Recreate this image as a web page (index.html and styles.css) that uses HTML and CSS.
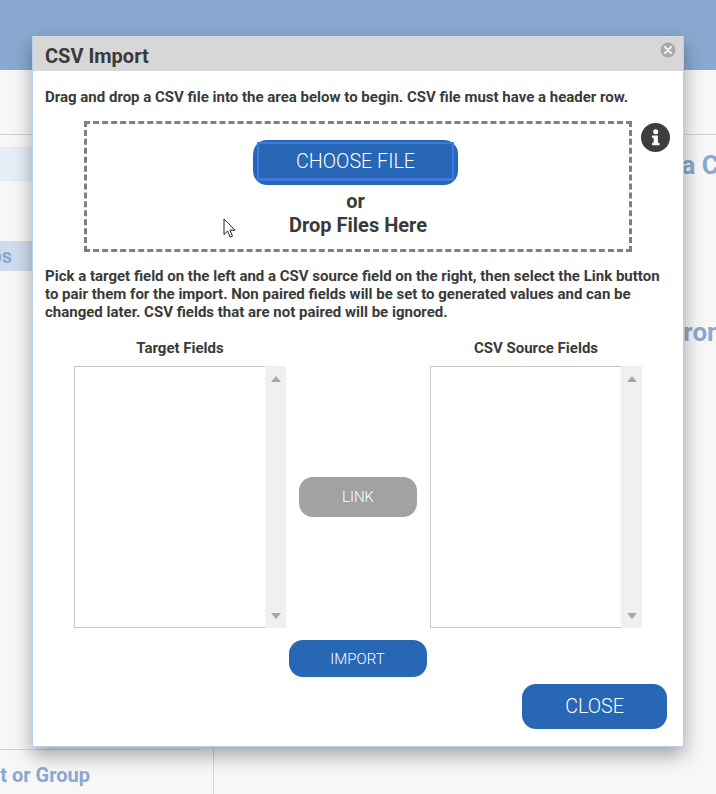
FILE: index.html

```html
<!DOCTYPE html>
<html lang="en">
<head>
<meta charset="utf-8"/>
<title>CSV Import</title>
<link rel="stylesheet" href="styles.css">
</head>
<body>
<div class="top-band"></div>
<div class="page">
  <div class="sidebar">
    <div class="side-head"></div>
    <div class="side-item light"></div>
    <div class="side-item active">Contacts and Groups</div>
    <div class="side-foot">Add Contact or Group</div>
  </div>
  <div class="main">
    <div class="main-head"></div>
    <div class="main-title first">Import Data Collection</div>
    <div class="main-title second">from File</div>
  </div>
</div>

<div class="modal">
  <div class="modal-header">
    <span class="modal-title">CSV Import</span>
    <span class="modal-x">
      <svg width="16" height="16" viewBox="0 0 16 16"><circle cx="8" cy="8" r="7.5" fill="#aaa"/><path d="M5 5l6 6M11 5l-6 6" stroke="#eee" stroke-width="2.2" stroke-linecap="round"/></svg>
    </span>
  </div>
  <div class="modal-body">
    <p class="note">Drag and drop a CSV file into the area below to begin. CSV file must have a header row.</p>
    <div class="drop-row">
      <div class="drop-zone">
        <button class="btn choose-btn"><span class="choose-inner">CHOOSE FILE</span></button>
        <div class="drop-or">or</div>
        <div class="drop-text">Drop Files Here</div>
      </div>
      <span class="info-icon">
        <svg width="29" height="29" viewBox="0 0 30 30"><circle cx="15" cy="15" r="15" fill="#3d3d3d"/><circle cx="15.2" cy="9" r="2.6" fill="#fff"/><path d="M11.5 13h6v7.5h1.6V23h-7.6v-2.5h1.6v-5h-1.6z" fill="#fff"/></svg>
      </span>
    </div>
    <p class="note pair-note">Pick a target field on the left and a CSV source field on the right, then select the Link button to pair them for the import. Non paired fields will be set to generated values and can be changed later. CSV fields that are not paired will be ignored.</p>
    <div class="fields">
      <div class="field-col">
        <div class="field-label">Target Fields</div>
        <div class="list-box">
          <div class="scroll-track">
            <span class="arrow-up"></span>
            <span class="arrow-down"></span>
          </div>
        </div>
      </div>
      <div class="link-col">
        <button class="btn link-btn">LINK</button>
      </div>
      <div class="field-col">
        <div class="field-label">CSV Source Fields</div>
        <div class="list-box">
          <div class="scroll-track">
            <span class="arrow-up"></span>
            <span class="arrow-down"></span>
          </div>
        </div>
      </div>
    </div>
    <div class="import-row">
      <button class="btn import-btn">IMPORT</button>
    </div>
    <div class="close-row">
      <button class="btn close-btn">CLOSE</button>
    </div>
  </div>
</div>

<svg class="cursor" width="14" height="21" viewBox="0 0 14 21"><path d="M1 1v15.5l3.6-3.4 2.5 6 2.4-1-2.5-5.9h5z" fill="#fff" stroke="#222" stroke-width="1"/></svg>
</body>
</html>
```

FILE: styles.css

```css
html, body {
  margin: 0;
  height: 794px;
  overflow: hidden;
}
body {
  font-family: Roboto, "Liberation Sans", sans-serif;
  background: #f7f7f7;
  color: #3a3a3a;
}
.top-band {
  height: 70px;
  background: #8aa9d0;
}
.page {
  display: flex;
  height: 724px;
}
.sidebar {
  width: 213px;
  flex-shrink: 0;
  display: flex;
  flex-direction: column;
  overflow: hidden;
}
.side-head {
  height: 64px;
  border-bottom: 1px solid #d4d4d4;
  flex-shrink: 0;
}
.side-item {
  flex-shrink: 0;
}
.side-item.light {
  height: 34px;
  margin-top: 12px;
  background: #e6edf6;
}
.side-item.active {
  height: 30px;
  margin-top: 60px;
  background: #cfdcee;
  color: #8aa9d0;
  font-size: 20px;
  font-weight: 700;
  line-height: 30px;
  white-space: nowrap;
  display: flex;
  justify-content: flex-end;
  padding-right: 201px;
}
.side-foot {
  margin-top: auto;
  height: 44px;
  border-top: 1px solid #d4d4d4;
  margin-right: 13px;
  color: #8aa9d0;
  font-size: 20px;
  font-weight: 700;
  line-height: 50px;
  white-space: nowrap;
  display: flex;
  justify-content: flex-end;
  padding-right: 110px;
}
.main {
  flex: 1;
  border-left: 1px solid #d4d4d4;
  overflow: hidden;
  display: flex;
  flex-direction: column;
  align-items: flex-start;
}
.main-head {
  height: 64px;
  align-self: stretch;
  border-bottom: 1px solid #d4d4d4;
  flex-shrink: 0;
}
.main-title {
  color: #8aa9d0;
  font-size: 26px;
  font-weight: 700;
  white-space: nowrap;
}
.main-title.first {
  margin-top: 15px;
  margin-left: 343px;
}
.main-title.second {
  margin-top: 137px;
  margin-left: 460px;
}
.modal {
  position: absolute;
  left: 32px;
  top: 36px;
  width: 650px;
  height: 710px;
  background: #fff;
  border: 1px solid #b7cfe9;
  border-top: none;
  box-shadow: 0 8px 18px rgba(0, 0, 0, 0.35);
  display: flex;
  flex-direction: column;
}
.modal-header {
  height: 35px;
  background: #d7d7d7;
  display: flex;
  align-items: center;
  justify-content: space-between;
  padding: 0 7px 0 12px;
  flex-shrink: 0;
}
.modal-title {
  font-size: 20px;
  font-weight: 700;
  margin-top: 5px;
}
.modal-x {
  display: flex;
  margin-top: -8px;
}
.modal-body {
  padding: 0 16px 0 12px;
  flex: 1;
  display: flex;
  flex-direction: column;
}
.note {
  margin: 17px 0 0;
  font-size: 15px;
  line-height: 18px;
  font-weight: 700;
}
.drop-row {
  display: flex;
  align-items: flex-start;
  margin: 15px 0 0 39px;
}
.drop-zone {
  width: 548px;
  height: 131px;
  flex-shrink: 0;
  box-sizing: border-box;
  border: 3px dashed #808080;
  display: flex;
  flex-direction: column;
  align-items: center;
}
.info-icon {
  display: flex;
  flex-shrink: 0;
  margin: 2px 0 0 9px;
}
.btn {
  border: none;
  font-family: Roboto, "Liberation Sans", sans-serif;
  font-weight: 300;
  color: #fff;
  background: #2767b5;
  padding: 0;
}
.choose-btn {
  width: 205px;
  height: 45px;
  margin: 16px 5px 0 0;
  padding: 2px 4px 4px;
  border-radius: 14px;
  font-size: 19.7px;
  flex-shrink: 0;
}
.choose-inner {
  display: flex;
  align-items: center;
  justify-content: center;
  height: 100%;
  box-sizing: border-box;
  border: 2px solid #3d7ade;
  border-bottom-width: 3px;
}
.drop-or {
  font-size: 20px;
  font-weight: 700;
  line-height: 24px;
  margin: 4px 5px 0 0;
}
.drop-text {
  font-size: 20px;
  font-weight: 700;
  line-height: 24px;
}
.pair-note {
  margin-top: 15px;
}
.fields {
  display: flex;
  margin: 18px 0 0 29px;
}
.field-col {
  width: 212px;
}
.field-label {
  font-size: 15px;
  font-weight: 700;
  line-height: 18px;
  text-align: center;
}
.list-box {
  height: 262px;
  box-sizing: border-box;
  margin-top: 9px;
  border: 1px solid #c8c8c8;
  border-right: none;
  display: flex;
  justify-content: flex-end;
}
.scroll-track {
  width: 21px;
  margin: -1px 0 -1px;
  background: #f0f0f0;
  display: flex;
  flex-direction: column;
  align-items: center;
  justify-content: space-between;
  padding: 10px 0 9px;
  box-sizing: content-box;
  height: 243px;
}
.arrow-up {
  border: 5px solid transparent;
  border-top: none;
  border-bottom: 6px solid #a8a8a8;
}
.arrow-down {
  border: 5px solid transparent;
  border-bottom: none;
  border-top: 6px solid #a8a8a8;
}
.link-col {
  width: 144px;
  display: flex;
  justify-content: center;
  align-items: flex-start;
  padding-top: 138px;
  box-sizing: border-box;
}
.link-btn {
  width: 118px;
  height: 40px;
  border-radius: 14px;
  background: #a2a2a2;
  font-size: 15px;
}
.import-row {
  display: flex;
  justify-content: center;
  margin: 12px 0 0 3px;
}
.import-btn {
  width: 138px;
  height: 37px;
  border-radius: 14px;
  font-size: 15px;
}
.close-row {
  display: flex;
  justify-content: flex-end;
  margin-top: 7px;
}
.close-btn {
  width: 145px;
  height: 45px;
  border-radius: 14px;
  font-size: 19.7px;
}
.cursor {
  position: absolute;
  left: 223px;
  top: 218px;
}
```
